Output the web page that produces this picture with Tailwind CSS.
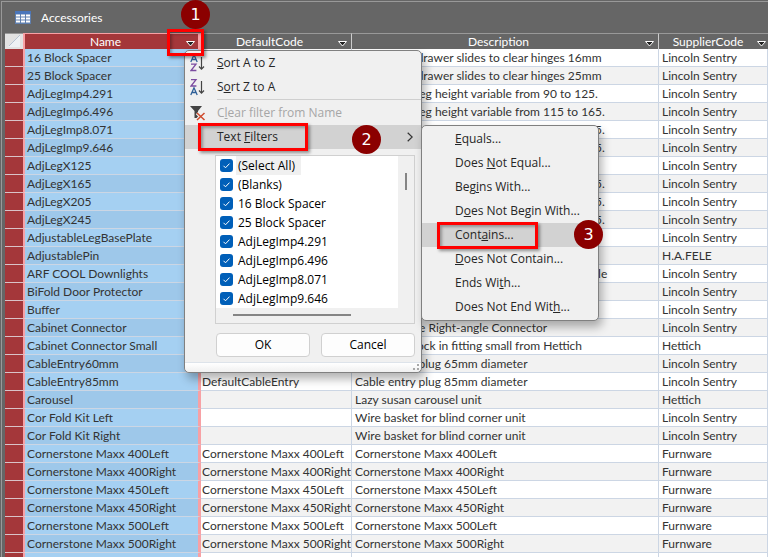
<!DOCTYPE html>
<html lang="en">
<head>
<meta charset="utf-8">
<meta name="viewport" content="width=device-width, initial-scale=1">
<title>Accessories</title>
<script src="https://cdn.jsdelivr.net/npm/@tailwindcss/browser@4"></script>
</head>
<body class="bg-[#666666]">
<div class="relative h-screen overflow-hidden bg-[#666666] pt-px pl-px font-['Lato',sans-serif] text-[12px] text-[#333333]">
  <div class="border-t border-l border-[#999999] pl-[3px]">
    <header class="flex h-[31px] items-center gap-[10px] pl-[10px] text-white">
      <svg class="h-[13px] w-4" viewBox="0 0 16 13" aria-hidden="true">
        <rect width="16" height="13" fill="#5f7fae"/>
        <rect width="16" height="3" fill="#4a76bb"/>
        <path d="M1 3.500h4v2H1zM6 3.500h4v2H6zM11 3.500h4v2h-4zM1 6.500h4v2H1zM6 6.500h4v2H6zM11 6.500h4v2h-4zM1 9.500h4v2H1zM6 9.500h4v2H6zM11 9.500h4v2h-4z" fill="#fff"/>
      </svg>
      <h1>Accessories</h1>
    </header>
    <table class="w-full table-fixed border-separate border-spacing-0 whitespace-nowrap">
      <colgroup><col class="w-[18px]"><col class="w-[178px]"><col class="w-[151px]"><col class="w-[307px]"><col></colgroup>
      <thead>
        <tr class="h-4 leading-[15px] text-white">
          <th class="border-t border-[#999999] p-0" aria-label="Select all rows">
            <svg class="block h-[15px] w-[18px]" viewBox="0 0 18 15" aria-hidden="true"><rect width="18" height="15" fill="#e2e2e2"/><path d="M3 13 15 1v12z" fill="#eef1f4"/><path d="M4 12 15 1" stroke="#b7c3d3"/></svg>
          </th>
          <th class="border-t border-r-[3px] border-l-2 border-[#f7a1a5] bg-[#a4373a] p-0 font-normal">
            <div class="flex items-center"><span class="flex-1">Name</span><button class="mr-[2px] flex h-[15px] w-[10px] items-center pt-1" aria-label="Filter Name"><svg class="h-[6px] w-[9px]" viewBox="0 0 9 6"><path d="M.5.5h8l-4 4.500z" fill="#222" stroke="#fff"/></svg></button></div>
          </th>
          <th class="border-t border-r border-[#999999] border-r-[#cccccc] p-0 font-normal">
            <div class="flex items-center"><span class="flex-1">DefaultCode</span><button class="mr-[3px] flex h-[15px] w-[10px] items-center pt-1" aria-label="Filter DefaultCode"><svg class="h-[6px] w-[9px]" viewBox="0 0 9 6"><path d="M.5.5h8l-4 4.500z" fill="#222" stroke="#fff"/></svg></button></div>
          </th>
          <th class="border-t border-r border-[#999999] border-r-[#cccccc] p-0 font-normal">
            <div class="flex items-center"><span class="flex-1">Description</span><button class="mr-[3px] flex h-[15px] w-[10px] items-center pt-1" aria-label="Filter Description"><svg class="h-[6px] w-[9px]" viewBox="0 0 9 6"><path d="M.5.5h8l-4 4.500z" fill="#222" stroke="#fff"/></svg></button></div>
          </th>
          <th class="border-t border-[#999999] p-0 font-normal">
            <div class="flex items-center"><span class="flex-1">SupplierCode</span><button class="mr-px flex h-[15px] w-[10px] items-center pt-1" aria-label="Filter SupplierCode"><svg class="h-[6px] w-[9px]" viewBox="0 0 9 6"><path d="M.5.5h8l-4 4.500z" fill="#222" stroke="#fff"/></svg></button></div>
          </th>
        </tr>
      </thead>
      <tbody id="rows"></tbody>
    </table>
  </div>

  <!-- Column filter menu -->
  <div role="menu" class="absolute top-[50px] left-[184px] w-[238px] rounded-[5px] border border-[#808080] bg-[#f0f0f0] font-['Open_Sans',sans-serif] text-[12px] text-[#262626] shadow-[3px_6px_10px_rgba(0,0,0,0.3)]">
    <button role="menuitem" class="flex h-6 w-full items-center">
      <svg class="mr-[7px] ml-[5px] h-[18px] w-[18px]" viewBox="0 0 18 18" aria-hidden="true"><path d="M.8 8 4 .8 7.200 8M2 5.500h4" fill="none" stroke="#2f6098" stroke-width="1.300"/><path d="M1 10.200h5L1 16.500h5.400" fill="none" stroke="#7b4ba0" stroke-width="1.300"/><path d="M11.500 3v12M9 12.500l2.500 2.700 2.500-2.700" fill="none" stroke="#444" stroke-width="1.200"/></svg>
      <span class="pl-[2px]"><u>S</u>ort A to Z</span>
    </button>
    <button role="menuitem" class="flex h-6 w-full items-center">
      <svg class="mr-[7px] ml-[5px] h-[18px] w-[18px]" viewBox="0 0 18 18" aria-hidden="true"><path d="M1 1.700h5L1 8h5.400" fill="none" stroke="#7b4ba0" stroke-width="1.300"/><path d="M.8 17 4 9.800 7.200 17M2 14.500h4" fill="none" stroke="#2f6098" stroke-width="1.300"/><path d="M11.500 3v12M9 12.500l2.500 2.700 2.500-2.700" fill="none" stroke="#444" stroke-width="1.200"/></svg>
      <span class="pl-[2px]">S<u>o</u>rt Z to A</span>
    </button>
    <hr class="ml-8 border-[#cfcfcf]">
    <button role="menuitem" disabled class="flex h-[25px] w-full items-center text-[#a6a6a6]">
      <svg class="mr-[7px] ml-[5px] h-[18px] w-[18px]" viewBox="0 0 18 18" aria-hidden="true"><path d="M0 2h12L8 7v7H4.500V7z" fill="#444"/><path d="M7 9l7 7M14 9l-7 7" stroke="#f0f0f0" stroke-width="3.400"/><path d="M7 9l7.500 7M14.500 9l-7.500 7" stroke="#cf4a2c" stroke-width="1.500"/></svg>
      <span class="pl-[2px]">C<u>l</u>ear filter from Name</span>
    </button>
    <button role="menuitem" aria-haspopup="true" class="flex h-6 w-full items-center bg-[#d2d2d2] pr-2 pl-8">
      <span class="flex-1 text-left">Text <u>F</u>ilters</span>
      <svg class="h-[10px] w-[6px]" viewBox="0 0 6 10" aria-hidden="true"><path d="M.7.7 5.200 5 .7 9.300" fill="none" stroke="#333" stroke-width="1.200"/></svg>
    </button>
    <div class="mt-[6px] mr-[6px] ml-[30px] border border-[#d0d0d0]">
      <div class="flex">
        <div id="values" class="flex-1 bg-white text-black"></div>
        <div class="w-4 pt-[17px] pl-[7px]"><div class="h-[17px] w-[2px] bg-[#858585]"></div></div>
      </div>
      <div class="h-[15px] pt-[6px] pl-[17px]"><div class="h-[2px] w-[118px] bg-[#858585]"></div></div>
    </div>
    <div class="mt-[9px] mr-[6px] mb-[5px] ml-[31px] grid grid-cols-2 gap-[11px] text-black">
      <button class="h-6 rounded-[4px] border border-[#d0d0d0] bg-[#fdfdfd]">OK</button>
      <button class="h-6 rounded-[4px] border border-[#d0d0d0] bg-[#fdfdfd]">Cancel</button>
    </div>
    <div class="flex h-[10px] items-end justify-end rounded-b-[5px] border-t border-[#dde3ea] bg-gradient-to-b from-white to-[#f0f0f0] p-[2px]">
      <svg class="h-[6px] w-[6px]" viewBox="0 0 6 6" aria-hidden="true"><path d="M4 0h2v2H4zM4 4h2v2H4zM0 4h2v2H0z" fill="#a8a8a8"/></svg>
    </div>
  </div>

  <!-- Text filter submenu -->
  <div role="menu" class="absolute top-[125px] left-[421px] w-[178px] rounded-[5px] border border-[#808080] bg-[#f0f0f0] py-px font-['Open_Sans',sans-serif] text-[12px] text-[#262626] shadow-[3px_6px_10px_rgba(0,0,0,0.3)]">
    <button role="menuitem" class="block h-6 w-full pl-[33px] text-left"><u>E</u>quals...</button>
    <button role="menuitem" class="block h-6 w-full pl-[33px] text-left">Does <u>N</u>ot Equal...</button>
    <button role="menuitem" class="block h-6 w-full pl-[33px] text-left">Beg<u>i</u>ns With...</button>
    <button role="menuitem" class="block h-6 w-full pl-[33px] text-left">D<u>o</u>es Not Begin With...</button>
    <button role="menuitem" class="block h-6 w-full bg-[#d2d2d2] pl-[33px] text-left">Cont<u>a</u>ins...</button>
    <button role="menuitem" class="block h-6 w-full pl-[33px] text-left"><u>D</u>oes Not Contain...</button>
    <button role="menuitem" class="block h-6 w-full pl-[33px] text-left">Ends Wi<u>t</u>h...</button>
    <button role="menuitem" class="block h-6 w-full pl-[33px] text-left">Does Not End Wit<u>h</u>...</button>
  </div>

  <!-- Step markers -->
  <div class="absolute top-[29px] left-[167px] h-[27px] w-[37px] border-3 border-[#ff0000] shadow-[2px_2px_3px_rgba(0,0,0,0.4),inset_2px_2px_3px_rgba(0,0,0,0.3)]"></div>
  <div class="absolute top-[123px] left-[198px] h-7 w-[110px] border-3 border-[#ff0000] shadow-[2px_2px_3px_rgba(0,0,0,0.4),inset_2px_2px_3px_rgba(0,0,0,0.3)]"></div>
  <div class="absolute top-[222px] left-[437px] h-[27px] w-[101px] border-3 border-[#ff0000] shadow-[2px_2px_3px_rgba(0,0,0,0.4),inset_2px_2px_3px_rgba(0,0,0,0.3)]"></div>
  <div class="absolute top-0 left-[181px] flex size-[29px] items-center justify-center rounded-full bg-[#8b0000] font-['DejaVu_Sans',sans-serif] text-[16px] text-white">1</div>
  <div class="absolute top-[125px] left-[352px] flex size-[29px] items-center justify-center rounded-full bg-[#8b0000] font-['DejaVu_Sans',sans-serif] text-[16px] text-white">2</div>
  <div class="absolute top-[220px] left-[574px] flex size-[29px] items-center justify-center rounded-full bg-[#8b0000] font-['DejaVu_Sans',sans-serif] text-[16px] text-white">3</div>
</div>

<script>
const items = [
  ["16 Block Spacer", "", "Spacers for drawer slides to clear hinges 16mm", "Lincoln Sentry"],
  ["25 Block Spacer", "", "Spacers for drawer slides to clear hinges 25mm", "Lincoln Sentry"],
  ["AdjLegImp4.291", "", "Adjustable, leg height variable from 90 to 125.", "Lincoln Sentry"],
  ["AdjLegImp6.496", "", "Adjustable, leg height variable from 115 to 165.", "Lincoln Sentry"],
  ["AdjLegImp8.071", "", "Adjustable, leg height variable from 155 to 205.", "Lincoln Sentry"],
  ["AdjLegImp9.646", "", "Adjustable, leg height variable from 195 to 245.", "Lincoln Sentry"],
  ["AdjLegX125", "", "Adjustable, leg height variable from 90 to 125.", "Lincoln Sentry"],
  ["AdjLegX165", "", "Adjustable, leg height variable from 115 to 165.", "Lincoln Sentry"],
  ["AdjLegX205", "", "Adjustable, leg height variable from 155 to 205.", "Lincoln Sentry"],
  ["AdjLegX245", "", "Adjustable, leg height variable from 195 to 245.", "Lincoln Sentry"],
  ["AdjustableLegBasePlate", "", "", "Lincoln Sentry"],
  ["AdjustablePin", "", "", "H.A.FELE"],
  ["ARF COOL Downlights", "", "ARF cool downlights with transformer and cable", "Lincoln Sentry"],
  ["BiFold Door Protector", "", "", "Lincoln Sentry"],
  ["Buffer", "", "", "Lincoln Sentry"],
  ["Cabinet Connector", "", "Cabinet Plate Right-angle Connector", "Lincoln Sentry"],
  ["Cabinet Connector Small", "", "Cabinets knock in fitting small from Hettich", "Hettich"],
  ["CableEntry60mm", "", "Cable entry plug 65mm diameter", "Lincoln Sentry"],
  ["CableEntry85mm", "DefaultCableEntry", "Cable entry plug 85mm diameter", "Lincoln Sentry"],
  ["Carousel", "", "Lazy susan carousel unit", "Hettich"],
  ["Cor Fold Kit Left", "", "Wire basket for blind corner unit", "Lincoln Sentry"],
  ["Cor Fold Kit Right", "", "Wire basket for blind corner unit", "Lincoln Sentry"],
  ...["400Left", "400Right", "450Left", "450Right", "500Left", "500Right"].map(s => {
    const name = "Cornerstone Maxx " + s;
    return [name, name, name, "Furnware"];
  }),
  ["", "", "", ""]
];
const cell = "border-b border-r border-[#ccd6e4] py-0 pr-0 overflow-hidden";
document.getElementById("rows").innerHTML = items.map(([name, code, desc, supplier], i) => `
  <tr class="h-[18px] leading-[17px] ${i % 2 ? "bg-[#f2f2f2]" : "bg-white"}">
    <td class="border-b border-[#d9c3c8] bg-[#a4373a] p-0"></td>
    <td class="border-r-[3px] border-l-2 border-b border-r-[#f7a1a5] border-l-[#f7a1a5] border-b-[#ccd6e4] py-0 pr-0 pl-[2px] ${i % 2 ? "bg-[#9ec8ea]" : "bg-[#a5d0f2]"}">${name}</td>
    <td class="${cell} pl-px">${code}</td>
    <td class="${cell} pl-[3px]">${desc}</td>
    <td class="${cell} pl-[3px]">${supplier}</td>
  </tr>`).join("");

const values = ["(Select All)", "(Blanks)", "16 Block Spacer", "25 Block Spacer", "AdjLegImp4.291", "AdjLegImp6.496", "AdjLegImp8.071", "AdjLegImp9.646"];
document.getElementById("values").innerHTML = values.map((v, i) => `
  <label class="flex h-[19px] items-center gap-[3px] pl-1">
    <span class="relative flex size-[13px]">
      <input type="checkbox" checked class="size-[13px] appearance-none rounded-[3px] bg-[#005fb8]">
      <svg class="pointer-events-none absolute inset-0 size-[13px]" viewBox="0 0 13 13"><path d="M3.500 6.800 5.500 8.800 9.500 4.600" fill="none" stroke="#fff"/></svg>
    </span>
    <span class="px-[2px] leading-[19px] ${i ? "" : "bg-[#f0f0f0] pr-[6px]"}">${v}</span>
  </label>`).join("");
</script>
</body>
</html>
